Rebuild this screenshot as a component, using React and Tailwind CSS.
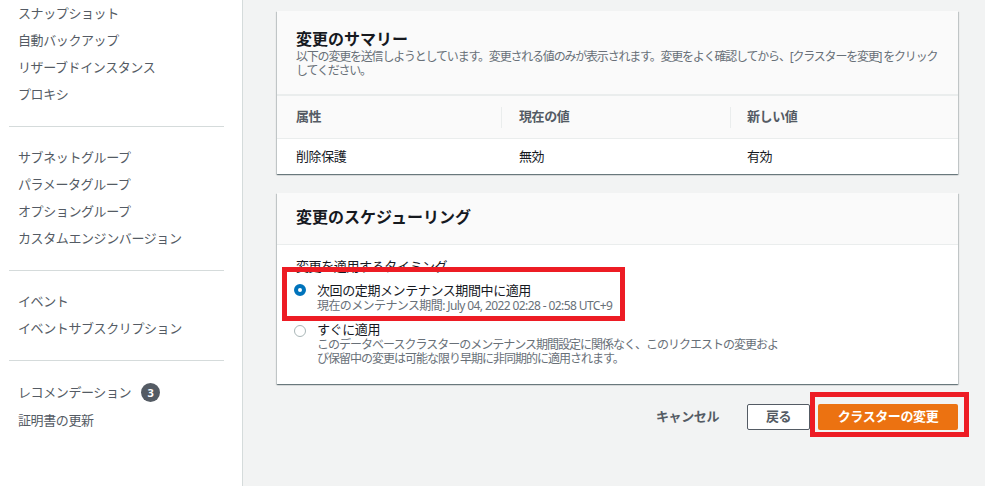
export default function App() {
  const navGroups = [
    ["スナップショット", "自動バックアップ", "リザーブドインスタンス", "プロキシ"],
    ["サブネットグループ", "パラメータグループ", "オプショングループ", "カスタムエンジンバージョン"],
    ["イベント", "イベントサブスクリプション"],
  ];
  const shadow =
    "shadow-[0_1px_1px_0_rgba(0,28,36,0.4),1px_1px_1px_0_rgba(0,28,36,0.15),-1px_1px_1px_0_rgba(0,28,36,0.15)]";
  return (
    <div className="flex h-[486px] w-[985px] overflow-hidden font-['Noto_Sans','Noto_Sans_CJK_JP',sans-serif] text-[13px] tracking-[-0.4px]">
      {/* Sidebar */}
      <div className="w-[243px] shrink-0 border-r border-[#d5dbdb] bg-white text-[#545b64]">
        {navGroups.map((g, gi) => (
          <div key={gi}>
            {g.map((t) => (
              <div key={t} className="pl-[18px] leading-[27px] whitespace-nowrap">
                {t}
              </div>
            ))}
            <div className="ml-[9px] mt-[18px] mb-[17px] h-px w-[215px] bg-[#d5dbdb]" />
          </div>
        ))}
        <div className="flex items-center gap-[10px] pl-[18px] leading-[29px]">
          <span>レコメンデーション</span>
          <span className="flex h-[19px] w-[19px] items-center justify-center rounded-full bg-[#545b64] text-[11px] font-bold leading-none tracking-normal text-white">
            3
          </span>
        </div>
        <div className="pl-[18px] leading-[27px]">証明書の更新</div>
      </div>

      {/* Main */}
      <div className="min-w-0 flex-1 bg-[#f2f3f3] pt-[11px] pl-[34px] pr-[27px]">
        {/* Card 1 */}
        <div className={`bg-white ${shadow}`}>
          <div className="border-b-2 border-[#eaeded] bg-[#fafafa] px-[19px] pt-[17px] pb-[16px]">
            <div className="text-[16px] font-bold leading-[22px] tracking-normal text-[#16191f]">
              変更のサマリー
            </div>
            <div className="whitespace-nowrap text-[12px] leading-[14px] tracking-[-1.2px] text-[#687078]">
              以下の変更を送信しようとしています。変更される値のみが表示されます。変更をよく確認してから、[クラスターを変更] をクリック
              <br />
              してください。
            </div>
          </div>
          <div className="grid h-[43px] grid-cols-[224px_229px_1fr] items-center border-b border-[#eaeded] bg-[#fafafa] font-bold text-[#545b64]">
            <div className="pl-[19px]">属性</div>
            <div className="flex items-center">
              <span className="h-[21px] w-px bg-[#eaeded]" />
              <span className="ml-[17px]">現在の値</span>
            </div>
            <div className="flex items-center">
              <span className="h-[21px] w-px bg-[#eaeded]" />
              <span className="ml-[16px]">新しい値</span>
            </div>
          </div>
          <div className="grid h-[35px] grid-cols-[224px_229px_1fr] items-center text-[#16191f]">
            <div className="pl-[19px]">削除保護</div>
            <div className="pl-[18px]">無効</div>
            <div className="pl-[17px]">有効</div>
          </div>
        </div>

        {/* Card 2 */}
        <div className={`relative mt-[19px] bg-white ${shadow}`}>
          <div className="border-b border-[#eaeded] bg-[#fafafa] px-[19px] pt-[13px] pb-[16px]">
            <div className="text-[16px] font-bold leading-[22px] tracking-normal text-[#16191f]">
              変更のスケジューリング
            </div>
          </div>
          <div className="px-[19px] pt-[11px] pb-[18px] text-[#16191f]">
            <div className="leading-[20px]">変更を適用するタイミング</div>
            <div className="mt-[5px] flex items-start">
              <span className="-ml-[2px] mt-[3px] h-[12px] w-[12px] shrink-0 rounded-full border-[4px] border-[#0073bb] bg-white" />
              <div className="ml-[11px]">
                <div className="leading-[18px]">次回の定期メンテナンス期間中に適用</div>
                <div className="whitespace-nowrap text-[12px] leading-[14px] tracking-[-0.6px] text-[#687078]">
                  現在のメンテナンス期間: July 04, 2022 02:28 - 02:58 UTC+9
                </div>
              </div>
            </div>
            <div className="mt-[7px] flex items-start">
              <span className="-ml-[2px] mt-[5px] h-[12px] w-[12px] shrink-0 rounded-full border-[1.5px] border-[#aab7b8] bg-white" />
              <div className="ml-[11px]">
                <div className="leading-[18px]">すぐに適用</div>
                <div className="whitespace-nowrap text-[12px] leading-[14px] tracking-[-1px] text-[#687078]">
                  このデータベースクラスターのメンテナンス期間設定に関係なく、このリクエストの変更およ
                  <br />
                  び保留中の変更は可能な限り早期に非同期的に適用されます。
                </div>
              </div>
            </div>
          </div>
          <div className="pointer-events-none absolute left-[5px] top-[74px] h-[54px] w-[343px] border-[5px] border-[#ed1c24]" />
        </div>

        {/* Footer */}
        <div className="mt-[20px] flex items-center justify-end gap-2 font-bold">
          <button className="h-[26px] px-[20px] text-[#545b64]">キャンセル</button>
          <button className="h-[26px] w-[63px] rounded-[2px] border border-[#545b64] bg-white text-[#545b64]">
            戻る
          </button>
          <button className="relative h-[26px] w-[140px] rounded-[2px] bg-[#ec7211] text-white">
            クラスターの変更
            <span className="pointer-events-none absolute -left-[8px] -top-[12px] h-[45px] w-[159px] border-[5px] border-[#ed1c24]" />
          </button>
        </div>
      </div>
    </div>
  );
}
